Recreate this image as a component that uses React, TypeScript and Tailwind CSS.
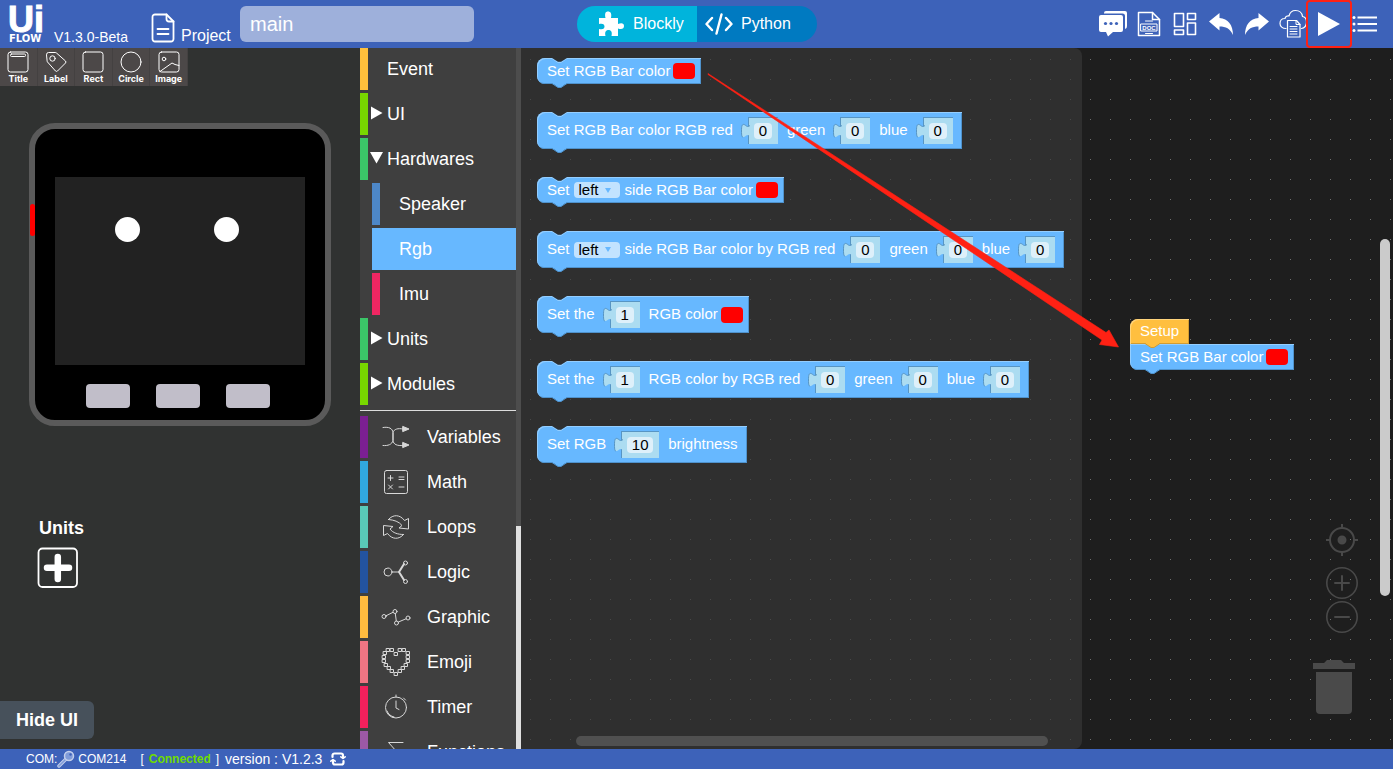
import type { ReactNode } from 'react';

const stroke = {
  fill: 'none',
  stroke: 'currentColor',
  strokeLinecap: 'round',
  strokeLinejoin: 'round',
} as const;

/* ---------- top bar ---------- */

function IconButton({ label, children }: { label: string; children: ReactNode }) {
  return (
    <button type="button" aria-label={label} className="relative flex h-12 w-9 items-center justify-center">
      {children}
    </button>
  );
}

function HeaderActions() {
  return (
    <div className="flex pr-[10px]">
      <IconButton label="Feedback">
        <svg width="30" height="26" viewBox="0 0 30 26">
          <path d="M6 2.500V2a2 2 0 0 1 2-2h19a2 2 0 0 1 2 2v13a3 3 0 0 1-2 3V5a2.500 2.500 0 0 0-2.500-2.500Z" fill="#fff" />
          <path d="M3 4h20a2 2 0 0 1 2 2v13a2 2 0 0 1-2 2h-8l-5 4.500L8 21H3a2 2 0 0 1-2-2V6a2 2 0 0 1 2-2Z" fill="#fff" />
          <g fill="#3d62b9">
            <circle cx="7.500" cy="12.500" r="1.600" />
            <circle cx="13" cy="12.500" r="1.600" />
            <circle cx="18.500" cy="12.500" r="1.600" />
          </g>
        </svg>
      </IconButton>
      <IconButton label="Documentation">
        <svg width="24" height="26" viewBox="0 0 24 26" className="text-white" {...stroke} strokeWidth="1.500">
          <path d="M1.500 1.500h14l7 7v16h-21Z" />
          <path d="M15.500 1.500v7h7" />
          <rect x="4" y="13" width="16" height="7" strokeWidth="1" />
          <path d="M8.500 10h7M8.500 22.500h7" strokeWidth="1" />
          <text x="12" y="19" fontSize="6" fontWeight="700" textAnchor="middle" fill="#fff" stroke="none">DOC</text>
        </svg>
      </IconButton>
      <IconButton label="Layout">
        <svg width="24" height="24" viewBox="0 0 24 24" className="text-white" {...stroke} strokeWidth="1.600">
          <rect x="1.500" y="1.500" width="9" height="13" />
          <rect x="14.500" y="1.500" width="8" height="6" />
          <rect x="1.500" y="18" width="9" height="4.500" />
          <rect x="14.500" y="11" width="8" height="11.500" />
        </svg>
      </IconButton>
      <IconButton label="Undo">
        <svg width="26" height="24" viewBox="0 0 26 24" fill="#fff">
          <path d="M1 9.500 11.500 1v5C20 6.500 25 13 25 23c-3-6.500-7-8.500-13.500-8.500v4Z" />
        </svg>
      </IconButton>
      <IconButton label="Redo">
        <svg width="26" height="24" viewBox="0 0 26 24" fill="#fff">
          <path d="M25 9.500 14.500 1v5C6 6.500 1 13 1 23c3-6.500 7-8.500 13.500-8.500v4Z" />
        </svg>
      </IconButton>
      <IconButton label="Cloud files">
        <svg width="28" height="30" viewBox="0 0 28 30" className="text-white" {...stroke} strokeWidth="1.200">
          <path d="M7 19.500C3.500 19.500 1 17.500 1 14.500c0-3 2-5 5-5 .5-2 2.500-3 4-2.500C11 3 13.500 1.500 16.500 1.500c4 0 6.500 2.500 7 6 2.500.5 4 3 4 5.500 0 3.500-2 6-5 6.500" />
          <path d="M8.500 11.500h9l3.500 4V28H8.500Z" fill="#3d62b9" />
          <path d="M17 11.500v4h4M11 17.500h7M11 20h7M11 22.500h7M11 25h7" strokeWidth="1" />
        </svg>
      </IconButton>
      <IconButton label="Run">
        <svg width="24" height="26" viewBox="0 0 24 26" fill="#fff">
          <path d="M1 1v24l22-12Z" />
        </svg>
        <span className="pointer-events-none absolute inset-y-0 -inset-x-[5px] z-10 rounded-sm border-2 border-[#ff2114]" />
      </IconButton>
      <IconButton label="Menu">
        <svg width="26" height="18" viewBox="0 0 26 18" fill="#fff">
          <circle cx="2" cy="2.500" r="1.500" />
          <circle cx="2" cy="9" r="1.500" />
          <circle cx="2" cy="15.500" r="1.500" />
          <path d="M5.500 1.500H25v2H5.500ZM5.500 8H25v2H5.500ZM5.500 14.500H25v2H5.500Z" />
        </svg>
      </IconButton>
    </div>
  );
}

function Header() {
  return (
    <header className="flex h-12 shrink-0 items-center bg-[#3d62b9] text-white">
      <div className="flex w-[577px] items-center">
        <div className="ml-2 flex w-[46px] flex-col pt-[2px]">
          <span className="text-[36px] leading-7 font-bold [-webkit-text-stroke:1px_white]">Ui</span>
          <span className="pl-px font-['DejaVu_Sans'] text-[10px] leading-[10px] font-bold">FLOW</span>
        </div>
        <span className="w-[97px] pt-[25px] text-sm leading-4">V1.3.0-Beta</span>
        <svg width="24" height="30" viewBox="0 0 24 30" className="mt-2" {...stroke} strokeWidth="1.800">
          <path d="M4 1.500h11.500L22.500 8.500V26a2.500 2.500 0 0 1-2.500 2.500H4A2.500 2.500 0 0 1 1.500 26V4A2.500 2.500 0 0 1 4 1.500Z" />
          <path d="M15.500 1.500V6a2.500 2.500 0 0 0 2.500 2.500h4.500M6.500 16h11M6.500 21h11" />
        </svg>
        <label htmlFor="project" className="w-[65px] pt-6 pl-[6px] leading-4">Project</label>
        <input
          id="project"
          defaultValue="main"
          className="h-9 w-[234px] rounded-md bg-[#9eb0db] px-[10px] text-xl text-white outline-none"
        />
      </div>
      <div className="flex h-9 w-60 overflow-hidden rounded-full">
        <button type="button" className="flex w-1/2 items-center gap-2 bg-[#00b4dc] pl-5">
          <svg width="28" height="26" viewBox="0 0 28 26" fill="#fff">
            <path d="M2 7h6.500C7.500 2.500 8.500 0.500 11 0.500s4 2 3 6.500h7v6c4-1.500 6-.5 6 2s-2 4-6 2.500V25h-6.500c1-4-.5-6-3-6s-4 2-3 6H2v-7c4 1 5.500-.5 5.500-2.500S6 12 2 13Z" />
          </svg>
          Blockly
        </button>
        <button type="button" className="flex w-1/2 items-center gap-2 bg-[#007ac1] pl-2">
          <svg width="28" height="22" viewBox="0 0 28 22" {...stroke} strokeWidth="2.400">
            <path d="M7 5 1.500 11 7 17M21 5l5.500 6L21 17M16.500 1.500l-5 19" />
          </svg>
          Python
        </button>
      </div>
      <div className="flex-1" />
      <HeaderActions />
    </header>
  );
}

/* ---------- device preview ---------- */

const tools: { name: string; art: ReactNode }[] = [
  { name: 'Title', art: <><rect x="1" y="1" width="20" height="20" rx="2.500" /><rect x="3.500" y="3" width="15" height="2.500" rx="1" /></> },
  { name: 'Label', art: <><path d="M1.500 3.500a2 2 0 0 1 2-2H10a2 2 0 0 1 1.500.5l9 8a1.500 1.500 0 0 1 0 2l-8 8a1.500 1.500 0 0 1-2 0l-8-9a2 2 0 0 1-.5-1.500Z" /><circle cx="7.500" cy="7.500" r="2.700" /></> },
  { name: 'Rect', art: <rect x="1" y="1" width="20" height="20" rx="2.500" /> },
  { name: 'Circle', art: <circle cx="11" cy="11" r="10" /> },
  { name: 'Image', art: <><rect x="1" y="1" width="20" height="20" rx="2.500" /><circle cx="6" cy="8" r="1.800" /><path d="M2 20.500 14 12l3 1.500 4 1" /></> },
];

function DevicePanel() {
  return (
    <aside className="flex w-[360px] shrink-0 flex-col items-start bg-[#303231] text-white">
      <div className="flex w-[188px] bg-[#4c4848]">
        {tools.map((t) => (
          <button
            key={t.name}
            type="button"
            className="flex h-[38px] flex-1 flex-col items-center border-r border-[#444141] pt-[3px] font-[Inter] text-[9px] leading-3 font-bold"
          >
            <svg width="22" height="22" viewBox="0 0 22 22" {...stroke}>{t.art}</svg>
            {t.name}
          </button>
        ))}
      </div>
      <div className="relative mt-[37px] ml-[29px] flex flex-col rounded-[26px] border-[6px] border-[#5a5a5a] bg-black px-5 pt-12 pb-[12px]">
        <span className="absolute top-[75px] -left-[5px] h-8 w-[5px] rounded-sm bg-[#f00]" />
        <div className="flex h-[188px] w-[250px] gap-[74px] bg-[#222] pt-10 pl-[60px]">
          <span className="size-[25px] rounded-full bg-white" />
          <span className="size-[25px] rounded-full bg-white" />
        </div>
        <div className="mt-[19px] flex justify-center gap-[26px] pr-1">
          <button type="button" aria-label="Button A" className="h-6 w-11 rounded bg-[#c1bec9]" />
          <button type="button" aria-label="Button B" className="h-6 w-11 rounded bg-[#c1bec9]" />
          <button type="button" aria-label="Button C" className="h-6 w-11 rounded bg-[#c1bec9]" />
        </div>
      </div>
      <h2 className="mt-[90px] ml-[39px] text-lg leading-6 font-bold">Units</h2>
      <button type="button" aria-label="Add unit" className="mt-[7px] ml-[37px]">
        <svg width="42" height="42" viewBox="0 0 42 42" {...stroke}>
          <rect x="1.500" y="1.500" width="38.500" height="38.500" rx="4" strokeWidth="1.800" />
          <path d="M10 20.800h22M20.800 10v22" strokeWidth="6.500" />
        </svg>
      </button>
      <div className="flex-1" />
      <button type="button" className="mb-[10px] h-[38px] rounded-r-md bg-[#47515b] px-4 text-lg font-bold">Hide UI</button>
    </aside>
  );
}

/* ---------- toolbox ---------- */

type Group = { name: string; bar: string; arrow?: 'right' | 'down'; child?: boolean; selected?: boolean };

const groups: Group[] = [
  { name: 'Event', bar: 'bg-[#ffc03c]' },
  { name: 'UI', bar: 'bg-[#78d700]', arrow: 'right' },
  { name: 'Hardwares', bar: 'bg-[#3bc568]', arrow: 'down' },
  { name: 'Speaker', bar: 'bg-[#4d87c7]', child: true },
  { name: 'Rgb', bar: 'bg-[#67b8ff]', child: true, selected: true },
  { name: 'Imu', bar: 'bg-[#f02662]', child: true },
  { name: 'Units', bar: 'bg-[#3bc568]', arrow: 'right' },
  { name: 'Modules', bar: 'bg-[#78d700]', arrow: 'right' },
];

const heart: [number, number][] = [
  [6, 3], [10, 3], [18, 3], [22, 3], [3, 6], [14, 7], [26, 6], [2, 10], [26, 10], [2, 14], [26, 14],
  [4, 18], [24, 18], [7, 21], [21, 21], [10, 24], [18, 24], [14, 27],
];

const categories: { name: string; bar: string; art: ReactNode }[] = [
  {
    name: 'Variables', bar: 'bg-[#7b1f93]',
    art: <><path d="M2 5.500c6-1 9.500 1 10 5v8c.5 4 4 5.500 10 5M2 23.500c5 .5 9-1 10-5v-8C13 7 17 6 22 7" /><path d="m22 4.500 6 2.500-6 2.500ZM22 20.500l6 2.500-6 2.500Z" fill="currentColor" /></>,
  },
  {
    name: 'Math', bar: 'bg-[#31a8df]',
    art: <><rect x="3.500" y="3.500" width="23" height="23" rx="2" /><path d="M7 11h5M9.500 8.500v5M18 10h5M18 12.500h5M7.500 18l4 4M11.500 18l-4 4M18 20h5" /></>,
  },
  {
    name: 'Loops', bar: 'bg-[#59c9b7]',
    art: <><path d="M7.500 7.500C12 2 19 2.500 23.500 8.500l4-2V17l-9.500-1 3-2.500c-3-4-8-5.500-13.500-6" /><path d="M22.500 22.500C18 28 11 27.500 6.500 21.500l-4 2V13.500l9.500 1-3 2.500c3 4 8 5.500 13.500 5.500" /></>,
  },
  {
    name: 'Logic', bar: 'bg-[#23539f]',
    art: <><circle cx="7" cy="15" r="4" /><path d="M11 15h7" /><path d="m18 15 5-8M18 15l5 8" strokeWidth="2" /><circle cx="24.500" cy="6" r="2" /><circle cx="24.500" cy="24.500" r="2" /></>,
  },
  {
    name: 'Graphic', bar: 'bg-[#ffbb3f]',
    art: <><circle cx="3" cy="14.500" r="2" /><circle cx="14" cy="9.500" r="2" /><circle cx="15.500" cy="21" r="2" /><circle cx="27" cy="16" r="2" /><path d="m5 13.800 7-3.500M14.300 11.500l1 7.500M17.500 20l7.500-3.200" /></>,
  },
  {
    name: 'Emoji', bar: 'bg-[#f07583]',
    art: <>{heart.map(([x, y]) => <rect key={`${x}-${y}`} x={x - 0.5} y={y - 1.500} width="3" height="3" />)}</>,
  },
  {
    name: 'Timer', bar: 'bg-[#f4205c]',
    art: <><circle cx="15" cy="15.500" r="10.500" /><path d="M15 9v7l3 1.500M15 3v2M22.500 6l2 2M6 19c1 3 4 5.500 7 6" /></>,
  },
  { name: 'Functions', bar: 'bg-[#9c59a6]', art: <path d="M22 5.500H7.500L16 15l-8.500 9.500H22" /> },
];

function Toolbox() {
  return (
    <nav className="flex w-[161px] shrink-0 overflow-hidden bg-[#3f3f3f] text-lg text-white">
      <div className="w-[156px] shrink-0">
        <ul className="flex flex-col gap-[3px] border-b border-[#ddd] pb-[5px]">
          {groups.map((g) => (
            <li key={g.name} className={g.child ? 'pl-3' : ''}>
              <button type="button" className={`flex h-[42px] w-full items-center text-left ${g.selected ? 'bg-[#67b8ff]' : ''}`}>
                <span className={`h-full w-2 ${g.bar}`} />
                <span className="flex w-[19px] pl-[2px]">
                  {g.arrow === 'right' && <svg width="13" height="14" viewBox="0 0 13 14" className="-mt-[2px]" fill="#fff"><path d="M1 .5v13L12.500 7Z" /></svg>}
                  {g.arrow === 'down' && <svg width="13" height="12" viewBox="0 0 13 12" className="-mt-[2px]" fill="#fff"><path d="M0 0h13l-6.500 11.500Z" /></svg>}
                </span>
                {g.name}
              </button>
            </li>
          ))}
        </ul>
        <ul className="flex flex-col gap-[3px] pt-[5px]">
          {categories.map((c) => (
            <li key={c.name}>
              <button type="button" className="flex h-[42px] w-full items-center text-left">
                <span className={`h-full w-2 ${c.bar}`} />
                <svg width="30" height="30" viewBox="0 0 30 30" className="mr-4 ml-[13px] shrink-0 text-[#d8d8d8]" {...stroke}>{c.art}</svg>
                {c.name}
              </button>
            </li>
          ))}
        </ul>
      </div>
      <div className="flex w-[5px] flex-col justify-end bg-[#4d4d4d]">
        <div className="h-[223px] bg-[#e0e0e0]" />
      </div>
    </nav>
  );
}

/* ---------- blocks ---------- */

function Block({
  children,
  tone = 'blue',
  notch = true,
  className = '',
}: {
  children: ReactNode;
  tone?: 'blue' | 'yellow';
  notch?: boolean;
  className?: string;
}) {
  const yellow = tone === 'yellow';
  const skin = yellow
    ? 'bg-[#ffbf3f] shadow-[inset_1px_1px_0_#ffd47c,inset_-1px_-1px_0_#d19c33]'
    : 'bg-[#67b8ff] shadow-[inset_1px_1px_0_#94ceff,inset_-1px_-1px_0_#4f92cc]';
  return (
    <div className={`relative flex w-fit items-center pl-[10px] whitespace-nowrap text-white ${skin} ${className}`}>
      {notch && (
        <svg width="17" height="6" viewBox="0 0 17 6" className="absolute top-0 left-[14px]">
          <path d="M1 .5l6 4h3l6-4" fill="none" stroke="#94ceff" />
          <path d="M1 0l6 3.800h3L16 0Z" fill="#2f2f2f" />
        </svg>
      )}
      {children}
      <svg width="17" height="6" viewBox="0 0 17 6" className="absolute -bottom-[5px] left-[14px] z-10">
        <path d="M1 0l6 4.500h3L16 0Z" fill={yellow ? '#ffbf3f' : '#67b8ff'} />
        <path d="M1 .5l6 4h3l6-4" fill="none" stroke={yellow ? '#d19c33' : '#4f92cc'} />
      </svg>
    </div>
  );
}

function Swatch() {
  return (
    <input
      type="color"
      aria-label="Color"
      defaultValue="#ff0000"
      className="mr-[6px] ml-[3px] block h-4 w-[22px] appearance-none overflow-hidden rounded border-0 bg-[#f00] p-0 [&::-webkit-color-swatch]:border-0 [&::-webkit-color-swatch-wrapper]:p-0"
    />
  );
}

function Value({ label, value, wide = false }: { label: string; value: string; wide?: boolean }) {
  return (
    <span className="relative mr-[9px] ml-[15px] flex h-[27px] items-center border-t border-l border-[#5795c4] bg-[#acdcf1] pr-[6px] pl-[5px]">
      <svg width="9" height="16" viewBox="0 0 9 16" className="absolute top-[5px] -left-2">
        <path d="M9 2.500C6 5 5 2 3 1.500S.5 3 .5 8s.5 6.500 2.500 6 3-3.500 6-1Z" fill="#acdcf1" />
        <path d="M9 2.500C6 5 5 2 3 1.500S.5 3 .5 8s.5 6 1.500 6" fill="none" stroke="#5795c4" />
      </svg>
      <input
        aria-label={label}
        defaultValue={value}
        className={`h-4 rounded bg-[#def0fa] p-0 text-center text-[15px] leading-4 text-black outline-none ${wide ? 'w-[26px]' : 'w-[18px]'}`}
      />
    </span>
  );
}

function Side() {
  return (
    <span className="relative mr-[5px] ml-1 flex items-center">
      <select
        aria-label="Side"
        defaultValue="left"
        className="h-4 w-[46px] appearance-none rounded bg-[#c2e3ff] py-0 pl-[5px] text-[15px] leading-4 text-black outline-none"
      >
        <option>left</option>
        <option>right</option>
      </select>
      <svg width="6" height="5" viewBox="0 0 6 5" className="pointer-events-none absolute right-[9px]">
        <path d="M0 0h6L3 5Z" fill="#67b8ff" />
      </svg>
    </span>
  );
}

function Flyout() {
  return (
    <section
      aria-label="Rgb blocks"
      className="relative flex w-[561px] flex-col gap-7 rounded-r-lg bg-[#2f2f2f] bg-[conic-gradient(from_270deg_at_1px_1px,#484848_90deg,transparent_0)] bg-[length:20px_20px] bg-[position:9px_11px] pt-[10px] pl-4"
    >
      <Block className="h-[26px] rounded-l-lg">Set RGB Bar color<Swatch /></Block>
      <Block className="h-[37px] rounded-l-lg">
        Set RGB Bar color RGB red<Value label="Red" value="0" />green<Value label="Green" value="0" />blue<Value label="Blue" value="0" />
      </Block>
      <Block className="h-[26px] rounded-l-lg">Set<Side />side RGB Bar color<Swatch /></Block>
      <Block className="h-[37px] rounded-l-lg">
        Set<Side />side RGB Bar color by RGB red<Value label="Red" value="0" />green<Value label="Green" value="0" />blue<Value label="Blue" value="0" />
      </Block>
      <Block className="h-[37px] rounded-l-lg">Set the<Value label="Index" value="1" />RGB color<Swatch /></Block>
      <Block className="h-[37px] rounded-l-lg">
        Set the<Value label="Index" value="1" />RGB color by RGB red<Value label="Red" value="0" />green<Value label="Green" value="0" />blue<Value label="Blue" value="0" />
      </Block>
      <Block className="h-[37px] rounded-l-lg">Set RGB<Value label="Brightness" value="10" wide /><span className="pr-[10px]">brightness</span></Block>
      <div className="absolute bottom-[3px] left-[55px] h-[10px] w-[472px] rounded-full bg-[#505050]" />
    </section>
  );
}

function Workspace() {
  return (
    <main className="relative flex min-w-0 flex-1 bg-[#1e1e1e] bg-[conic-gradient(from_270deg_at_1px_1px,#707070_90deg,transparent_0)] bg-[length:20px_20px] bg-[position:9px_11px] text-[15px]">
      <Flyout />
      <div className="absolute top-[271px] left-[609px]">
        <Block tone="yellow" notch={false} className="h-[25px] rounded-tl-lg pr-[10px]">Setup</Block>
        <Block notch={false} className="h-[26px] rounded-bl-lg">Set RGB Bar color<Swatch /></Block>
      </div>
      <div className="absolute right-[22px] bottom-[34px] flex flex-col items-center text-[#494949]">
        <button type="button" aria-label="Center workspace">
          <svg width="34" height="34" viewBox="0 0 34 34" {...stroke} strokeWidth="2" strokeLinecap="butt">
            <circle cx="17" cy="17" r="12" />
            <circle cx="17" cy="17" r="3.500" fill="currentColor" />
            <path d="M17 1v4M17 29v4M1 17h4M29 17h4" />
          </svg>
        </button>
        <button type="button" aria-label="Zoom in" className="mt-[9px]">
          <svg width="34" height="34" viewBox="0 0 34 34" {...stroke} strokeWidth="1.600">
            <circle cx="17" cy="17" r="15.200" />
            <path d="M10 17h14M17 10v14" strokeWidth="2" />
          </svg>
        </button>
        <button type="button" aria-label="Zoom out">
          <svg width="34" height="34" viewBox="0 0 34 34" {...stroke} strokeWidth="1.600">
            <circle cx="17" cy="17" r="15.200" />
            <path d="M10 17h14" strokeWidth="2" />
          </svg>
        </button>
        <svg width="42" height="56" viewBox="0 0 42 56" className="mt-[25px] mr-4" fill="#4a4a4a" role="img" aria-label="Trash">
          <path d="M0 4h11l3-3h14l3 3h11v6H0ZM3 13h36v38a4 4 0 0 1-4 4H7a4 4 0 0 1-4-4Z" />
        </svg>
      </div>
      <div className="absolute top-[191px] right-[3px] h-[357px] w-[10px] rounded-full bg-[#cbcbcb]" />
      <svg width="412" height="276" viewBox="0 0 412 276" className="pointer-events-none absolute top-[25px] left-[186px] z-20">
        <path d="M1 .5 399 259.500l3-2.500 9.500 17-19-2.500 2.500-4.500L1 1.500Z" fill="#ff2114" stroke="#ff2114" strokeWidth=".6" />
      </svg>
    </main>
  );
}

function StatusBar() {
  return (
    <footer className="flex h-5 shrink-0 items-center bg-[#3d62b9] pl-[26px] text-xs text-white">
      COM:
      <svg width="18" height="18" viewBox="0 0 18 18" className="mr-[3px]">
        <path d="m9 9-7 7" stroke="#c3cfec" strokeWidth="3.500" strokeLinecap="round" />
        <path d="m9 9-7 7" stroke="#7f9bd9" strokeWidth="1.500" strokeLinecap="round" />
        <circle cx="12" cy="6" r="4.500" fill="#7f9bd9" stroke="#c3cfec" strokeWidth="1.500" />
        <circle cx="13.500" cy="4.500" r="1.200" fill="#3d62b9" />
      </svg>
      COM214
      <span className="ml-[14px]">[</span>
      <span className="mx-[5px] font-bold text-[#6fdc00]">Connected</span>
      <span>]</span>
      <span className="ml-[6px] text-sm">version : V1.2.3</span>
      <button type="button" aria-label="Refresh" className="ml-2">
        <svg width="16" height="16" viewBox="0 0 16 16" {...stroke} strokeWidth="2.200">
          <path d="M2.500 6V4.500A2 2 0 0 1 4.500 2.500H11A2 2 0 0 1 13 4.500v2M13.500 10v1.500a2 2 0 0 1-2 2H5a2 2 0 0 1-2-2v-2" />
          <path d="m10.800 5.800 2.200 1.700 2.200-1.700M.8 10.200 3 8.500l2.200 1.700" strokeWidth="1.500" />
        </svg>
      </button>
    </footer>
  );
}

export default function App() {
  return (
    <div className="flex h-screen flex-col overflow-hidden font-['Liberation_Sans',sans-serif]">
      <Header />
      <div className="flex min-h-0 flex-1">
        <DevicePanel />
        <Toolbox />
        <Workspace />
      </div>
      <StatusBar />
    </div>
  );
}
